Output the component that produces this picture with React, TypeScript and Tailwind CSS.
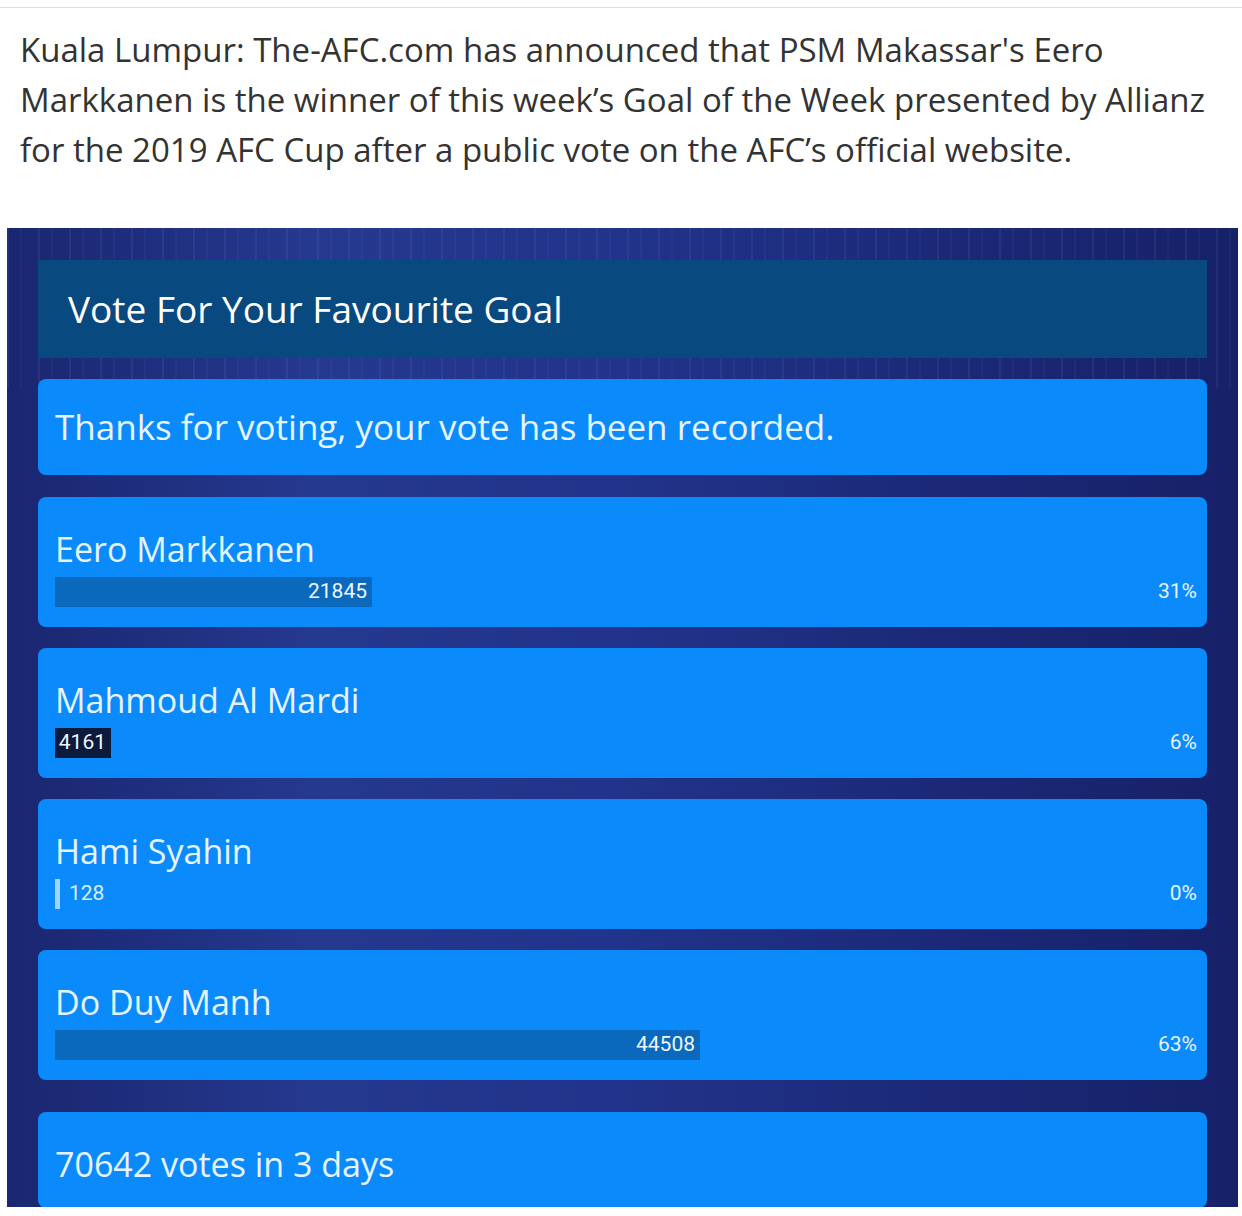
const polls = [
  { name: "Eero Markkanen", votes: 21845, pct: 31, bar: "bg-[#0a69bd]", barPx: 317 },
  { name: "Mahmoud Al Mardi", votes: 4161, pct: 6, bar: "bg-[#0c1a3c]", barPx: 56 },
  { name: "Hami Syahin", votes: 128, pct: 0, bar: "bg-[#9fd6ff]", barPx: 3 },
  { name: "Do Duy Manh", votes: 44508, pct: 63, bar: "bg-[#0a69bd]", barPx: 645 },
];

function PollRow({ p }: { p: (typeof polls)[number] }) {
  const tiny = p.barPx < 20;
  return (
    <div className="h-[130px] rounded-lg bg-[#0b8bfb] pl-[17px] pr-[10px] pt-[30px]">
      <div className="text-[34px] leading-[44px] text-[#e6f4ff]">{p.name}</div>
      <div className="mt-[6px] flex h-[30px] items-center">
        <div className="flex h-[30px] w-[1025px] items-center">
          <div
            className={`flex h-full items-center justify-end pr-[5px] ${p.bar}`}
            style={{ width: p.barPx }}
          >
            {!tiny && (
              <span className="font-['Roboto',sans-serif] text-[21px] text-[#eef7ff]">{p.votes}</span>
            )}
          </div>
          {tiny && (
            <span className="ml-[9px] font-['Roboto',sans-serif] text-[21px] text-[#d9eeff]">{p.votes}</span>
          )}
        </div>
        <span className="ml-auto font-['Roboto',sans-serif] text-[21px] text-[#e6f4ff]">{p.pct}%</span>
      </div>
    </div>
  );
}

export default function App() {
  return (
    <div className="h-[1216px] w-[1242px] overflow-hidden bg-white font-['Open_Sans',sans-serif]">
      <div className="h-[7px]" />
      <div className="border-t border-[#e0e0e0] px-5 pt-[17px]">
        <p className="whitespace-nowrap text-[33px] leading-[50px] text-[#333333]">
          Kuala Lumpur: The-AFC.com has announced that PSM Makassar's Eero
          <br />
          Markkanen is the winner of this week’s Goal of the Week presented by Allianz
          <br />
          for the 2019 AFC Cup after a public vote on the AFC’s official website.
        </p>
      </div>

      <div className="ml-[7px] mt-[53px] h-[979px] w-[1231px] overflow-hidden bg-[repeating-linear-gradient(90deg,rgba(190,200,255,0.07)_0px,rgba(190,200,255,0.07)_2px,transparent_2px,transparent_13px,rgba(190,200,255,0.04)_13px,rgba(190,200,255,0.04)_15px,transparent_15px,transparent_31px),linear-gradient(90deg,#1a2670_0%,#25398f_25%,#21338a_50%,#1b2876_78%,#172168_100%)] bg-[length:100%_160px,100%_100%] bg-no-repeat px-[31px] pt-[32px]">
        <div className="flex h-[98px] items-center bg-[#08497f] px-[30px] text-[37px] text-white">
          Vote For Your Favourite Goal
        </div>

        <div className="mt-[21px] flex h-[96px] items-center rounded-lg bg-[#0b8bfb] px-[17px] text-[35px] text-[#e6f4ff]">
          Thanks for voting, your vote has been recorded.
        </div>

        <div className="mt-[22px] flex flex-col gap-[21px]">
          {polls.map((p) => (
            <PollRow key={p.name} p={p} />
          ))}
        </div>

        <div className="mt-[32px] h-[96px] rounded-lg bg-[#0b8bfb] px-[17px] pt-[30px] text-[34px] leading-[44px] text-[#e6f4ff]">
          70642 votes in 3 days
        </div>
      </div>
    </div>
  );
}
